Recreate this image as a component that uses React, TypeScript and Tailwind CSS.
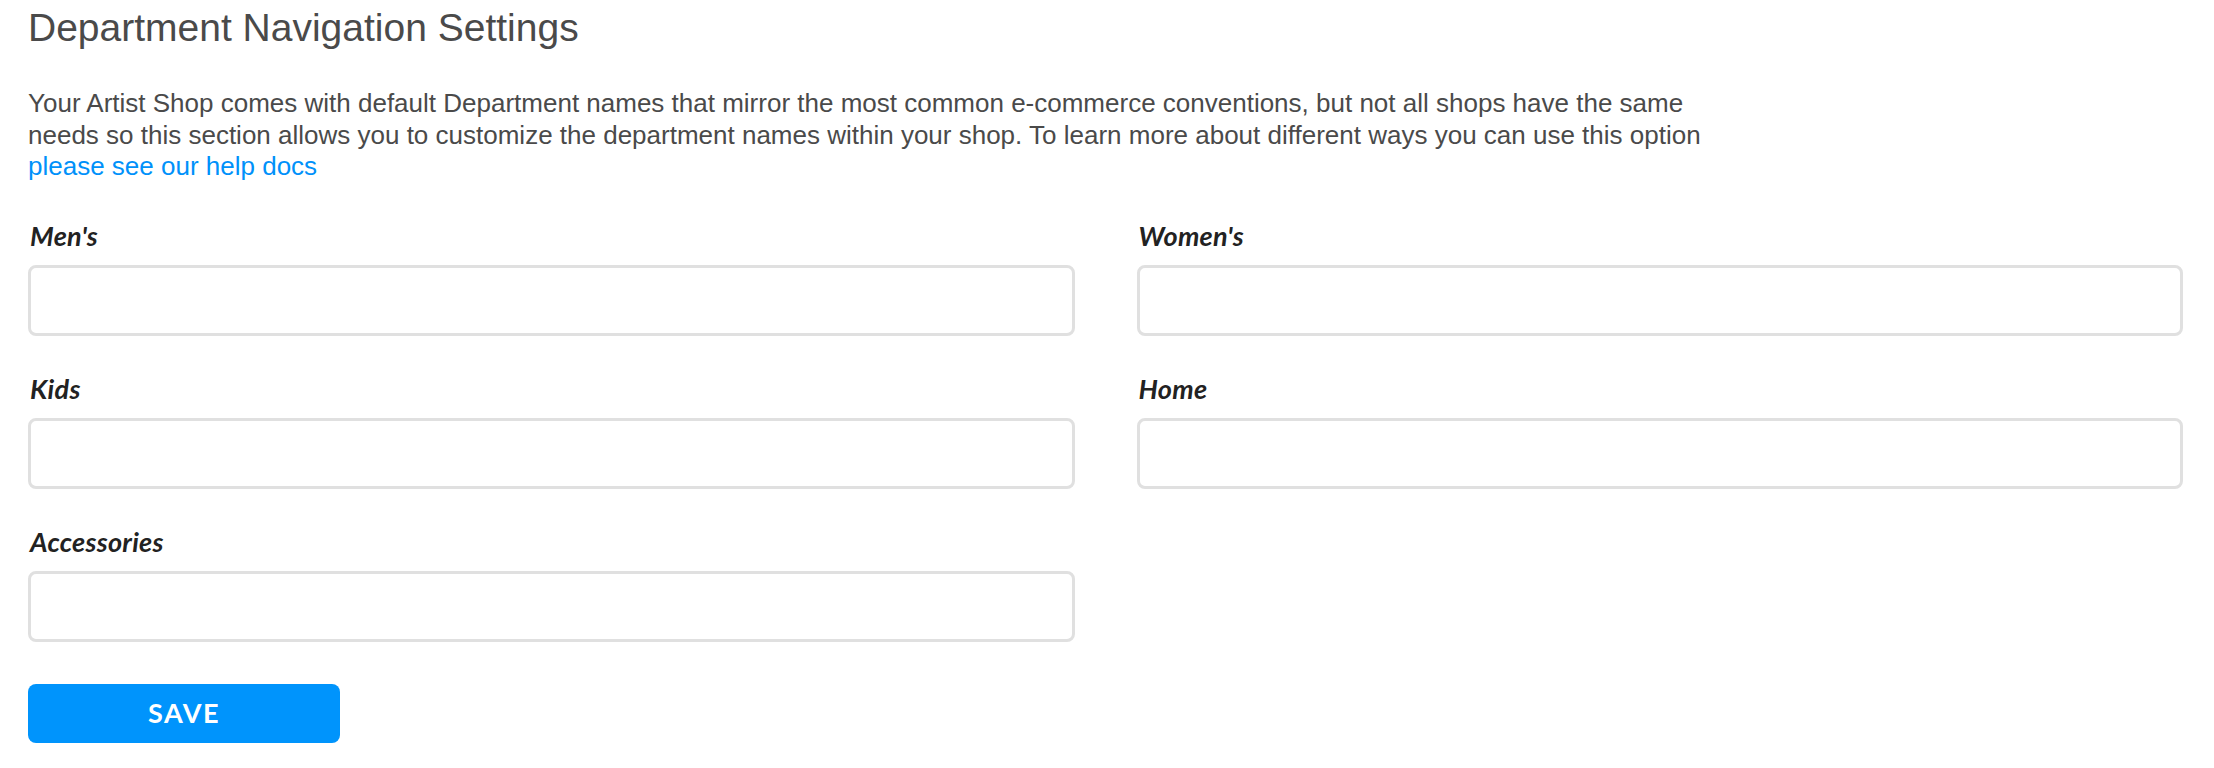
const fields = ["Men's", "Women's", 'Kids', 'Home', 'Accessories']

function Field({ label }: { label: string }) {
  return (
    <div className="flex flex-col">
      <label className="mb-[13px] pl-[2px] font-['Lato',sans-serif] text-[27px] font-bold italic leading-[32px] tracking-[0.3px] text-[#222222]">
        {label}
      </label>
      <input
        type="text"
        className="h-[71px] w-full rounded-[8px] border-[3px] border-[#e0e0e0] bg-white px-3 outline-none"
      />
    </div>
  )
}

export default function App() {
  return (
    <div className="min-h-[768px] bg-white pl-[28px] pr-[31px] pt-[5px]">
      <h1 className="font-['Liberation_Sans',Arial,sans-serif] text-[39px] font-normal leading-[46px] text-[#4a4a4a]">
        Department Navigation Settings
      </h1>
      <p className="mt-[37px] font-['Liberation_Sans',Arial,sans-serif] text-[26px] leading-[31.5px] text-[#4a4a4a]">
        Your Artist Shop comes with default Department names that mirror the most common e-commerce conventions, but not all shops have the same
        <br />
        needs so this section allows you to customize the department names within your shop. To learn more about different ways you can use this option
        <br />
        <a href="#" className="text-[#0091fa]">
          please see our help docs
        </a>
      </p>
      <div className="mt-[37px] grid grid-cols-2 gap-x-[62px] gap-y-[37px]">
        {fields.map((f) => (
          <Field key={f} label={f} />
        ))}
      </div>
      <button className="mt-[42px] flex h-[59px] w-[312px] items-center justify-center rounded-[8px] bg-[#0094fc] font-['Lato',sans-serif] text-[27px] font-bold tracking-[1.5px] text-white">
        SAVE
      </button>
    </div>
  )
}
